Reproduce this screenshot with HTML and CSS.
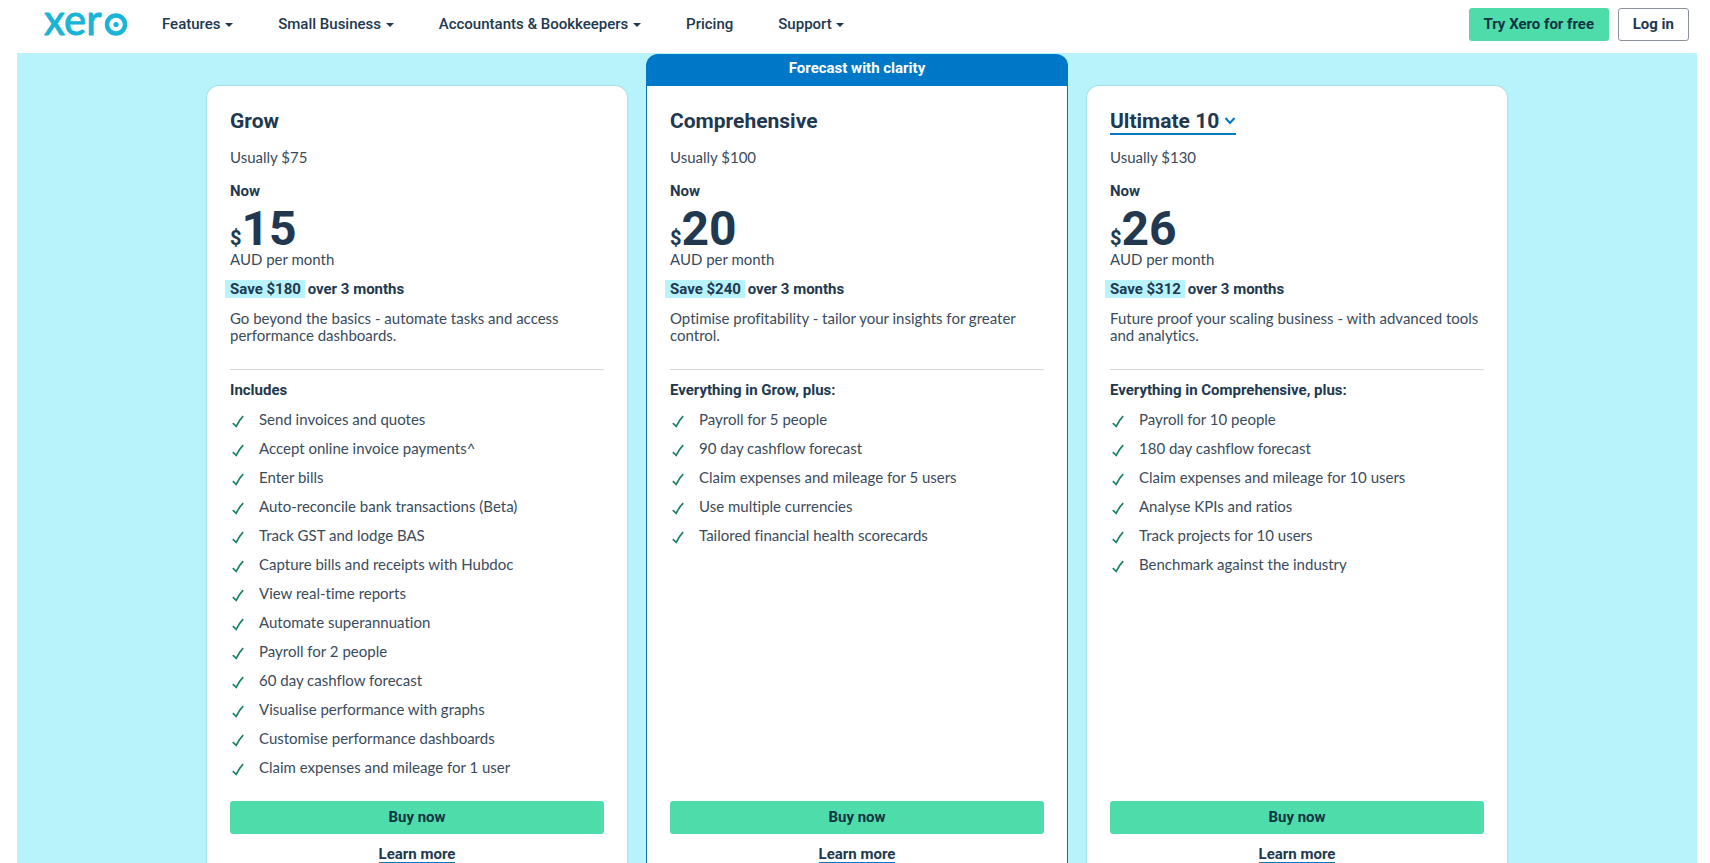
FILE: index.html
```html
<!DOCTYPE html>
<html lang="en">
<head>
    <meta charset="UTF-8">
    <meta name="viewport" content="width=device-width, initial-scale=1.0">
    <title>Pricing Plans | Xero AU</title>
    <link rel="stylesheet" href="styles.css">
</head>
<body>
    <!-- Shared icons -->
    <svg class="sprite" aria-hidden="true">
        <symbol id="check" viewBox="0 0 12 13">
            <path d="M0.8 8.2 L4.2 11.4 C6 7.6 8.2 4.2 11.2 1.2" fill="none" stroke="currentColor" stroke-width="1.7"/>
        </symbol>
        <symbol id="caret" viewBox="0 0 8 4">
            <path d="M0 0h8L4 4z" fill="currentColor"/>
        </symbol>
    </svg>

    <header class="header">
        <a href="#" class="logo" aria-label="Xero">
            <svg width="84" height="32" viewBox="0 0 84 32">
                <text class="logo-text" x="1" y="26">xer</text>
                <circle cx="73" cy="15.5" r="9" fill="none" stroke="#1ab4d7" stroke-width="4.4"/>
                <circle cx="73" cy="15.5" r="2.6" fill="#1ab4d7"/>
            </svg>
        </a>
        <nav class="nav">
            <button type="button">Features <svg class="caret"><use href="#caret"/></svg></button>
            <button type="button">Small Business <svg class="caret"><use href="#caret"/></svg></button>
            <button type="button">Accountants &amp; Bookkeepers <svg class="caret"><use href="#caret"/></svg></button>
            <a href="#">Pricing</a>
            <button type="button">Support <svg class="caret"><use href="#caret"/></svg></button>
        </nav>
        <div class="header-actions">
            <button type="button" class="btn btn-primary btn-try">Try Xero for free</button>
            <button type="button" class="btn btn-outline">Log in</button>
        </div>
    </header>

    <main class="pricing">
        <div class="plans">
            <section class="plan">
                <h2>Grow</h2>
                <p class="usual">Usually $75</p>
                <p class="now">Now</p>
                <p class="price"><span>$</span>15</p>
                <p>AUD per month</p>
                <p class="saving"><mark>Save $180</mark> over 3 months</p>
                <p class="description">Go beyond the basics - automate tasks and access performance dashboards.</p>
                <h3>Includes</h3>
                <ul class="features">
                    <li><svg class="check"><use href="#check"/></svg>Send invoices and quotes</li>
                    <li><svg class="check"><use href="#check"/></svg>Accept online invoice payments^</li>
                    <li><svg class="check"><use href="#check"/></svg>Enter bills</li>
                    <li><svg class="check"><use href="#check"/></svg>Auto-reconcile bank transactions (Beta)</li>
                    <li><svg class="check"><use href="#check"/></svg>Track GST and lodge BAS</li>
                    <li><svg class="check"><use href="#check"/></svg>Capture bills and receipts with Hubdoc</li>
                    <li><svg class="check"><use href="#check"/></svg>View real-time reports</li>
                    <li><svg class="check"><use href="#check"/></svg>Automate superannuation</li>
                    <li><svg class="check"><use href="#check"/></svg>Payroll for 2 people</li>
                    <li><svg class="check"><use href="#check"/></svg>60 day cashflow forecast</li>
                    <li><svg class="check"><use href="#check"/></svg>Visualise performance with graphs</li>
                    <li><svg class="check"><use href="#check"/></svg>Customise performance dashboards</li>
                    <li><svg class="check"><use href="#check"/></svg>Claim expenses and mileage for 1 user</li>
                </ul>
                <button type="button" class="btn btn-primary btn-buy">Buy now</button>
                <a href="#" class="learn-more">Learn more</a>
            </section>

            <section class="plan plan-featured">
                <div class="banner">Forecast with clarity</div>
                <h2>Comprehensive</h2>
                <p class="usual">Usually $100</p>
                <p class="now">Now</p>
                <p class="price"><span>$</span>20</p>
                <p>AUD per month</p>
                <p class="saving"><mark>Save $240</mark> over 3 months</p>
                <p class="description">Optimise profitability - tailor your insights for greater control.</p>
                <h3>Everything in Grow, plus:</h3>
                <ul class="features">
                    <li><svg class="check"><use href="#check"/></svg>Payroll for 5 people</li>
                    <li><svg class="check"><use href="#check"/></svg>90 day cashflow forecast</li>
                    <li><svg class="check"><use href="#check"/></svg>Claim expenses and mileage for 5 users</li>
                    <li><svg class="check"><use href="#check"/></svg>Use multiple currencies</li>
                    <li><svg class="check"><use href="#check"/></svg>Tailored financial health scorecards</li>
                </ul>
                <button type="button" class="btn btn-primary btn-buy">Buy now</button>
                <a href="#" class="learn-more">Learn more</a>
            </section>

            <section class="plan">
                <h2>
                    <label class="plan-picker">
                        <select aria-label="Ultimate plan size">
                            <option>Ultimate 10</option>
                        </select>
                        <svg width="12" height="8" viewBox="0 0 12 8"><path d="M1.5 1l4.5 5 4.5-5" fill="none" stroke="#0078c8" stroke-width="2"/></svg>
                    </label>
                </h2>
                <p class="usual">Usually $130</p>
                <p class="now">Now</p>
                <p class="price"><span>$</span>26</p>
                <p>AUD per month</p>
                <p class="saving"><mark>Save $312</mark> over 3 months</p>
                <p class="description">Future proof your scaling business - with advanced tools and analytics.</p>
                <h3>Everything in Comprehensive, plus:</h3>
                <ul class="features">
                    <li><svg class="check"><use href="#check"/></svg>Payroll for 10 people</li>
                    <li><svg class="check"><use href="#check"/></svg>180 day cashflow forecast</li>
                    <li><svg class="check"><use href="#check"/></svg>Claim expenses and mileage for 10 users</li>
                    <li><svg class="check"><use href="#check"/></svg>Analyse KPIs and ratios</li>
                    <li><svg class="check"><use href="#check"/></svg>Track projects for 10 users</li>
                    <li><svg class="check"><use href="#check"/></svg>Benchmark against the industry</li>
                </ul>
                <button type="button" class="btn btn-primary btn-buy">Buy now</button>
                <a href="#" class="learn-more">Learn more</a>
            </section>
        </div>
    </main>
</body>
</html>
```

FILE: styles.css
```css
:root {
    --ink: #21384f;
    --text: #3a4b5c;
    --blue: #0078c8;
    --sky: #b8f3fc;
    --green: #4edcab;
    --logo: #1ab4d7;
    --heading-font: Roboto, "Liberation Sans", sans-serif;
}

* {
    margin: 0;
    padding: 0;
    box-sizing: border-box;
}

body {
    height: 100vh;
    overflow: hidden;
    background-color: white;
    color: var(--text);
    font-family: Lato, "Liberation Sans", sans-serif;
    font-size: 15px;
    font-variant-ligatures: none;
    line-height: 17px;
}

button,
select {
    font: inherit;
    color: inherit;
    background: none;
    border: none;
    cursor: pointer;
}

.sprite {
    display: none;
}

/* Header */
.header {
    display: flex;
    align-items: center;
    padding: 8px 21px 12px 43px;
    font-family: var(--heading-font);
}

.logo {
    display: flex;
}

.logo svg {
    overflow: visible;
}

.logo-text {
    font-family: Lato, sans-serif;
    font-size: 42px;
    fill: var(--logo);
    stroke: var(--logo);
    stroke-width: 1;
    stroke-linejoin: round;
}

.nav {
    display: flex;
    gap: 45px;
    margin-left: 35px;
    color: var(--ink);
    font-weight: 500;
}

.nav a {
    color: inherit;
    text-decoration: none;
}

.caret {
    width: 8px;
    height: 4px;
    margin-left: 1px;
    vertical-align: middle;
}

.header-actions {
    display: flex;
    gap: 9px;
    margin-left: auto;
}

.btn {
    height: 33px;
    padding: 0 14px;
    border-radius: 3px;
    color: var(--ink);
    font-family: var(--heading-font);
    font-weight: 700;
}

.btn-primary {
    background-color: var(--green);
    color: #123544;
}

.btn-try {
    min-width: 140px;
}

.btn-outline {
    min-width: 70px;
    border: 1px solid #8b929c;
}

/* Plans */
.pricing {
    margin: 0 13px 0 17px;
    padding: 33px 20px 40px;
    background-color: var(--sky);
}

.plans {
    display: grid;
    grid-template-columns: repeat(3, 1fr);
    gap: 20px;
    max-width: 1300px;
    margin: 0 auto;
}

.plan {
    display: flex;
    flex-direction: column;
    padding: 23px 23px 32px;
    background-color: white;
    border-radius: 12px;
    box-shadow: 0 0 1px 1px rgba(0, 10, 30, 0.08);
}

.plan-featured {
    position: relative;
    margin: 0 -1px;
    padding-bottom: 31px;
    border: 1px solid #0f6fae;
    border-top: none;
    border-radius: 0 0 12px 12px;
    box-shadow: none;
}

/* Sits on top of the card */
.banner {
    position: absolute;
    bottom: 100%;
    left: -1px;
    right: -1px;
    height: 32px;
    border-radius: 12px 12px 0 0;
    background-color: var(--blue);
    color: white;
    font-family: var(--heading-font);
    font-weight: 700;
    line-height: 28px;
    text-align: center;
}

.plan h2 {
    margin-bottom: 16px;
    color: var(--ink);
    font-family: var(--heading-font);
    font-size: 21px;
    line-height: 24px;
}

.plan-picker {
    display: inline-flex;
    align-items: center;
    gap: 4px;
    height: 26px;
    margin-bottom: -2px;
    border-bottom: 2px solid var(--blue);
    vertical-align: top;
}

.plan-picker select {
    appearance: none;
    outline: none;
}

.usual {
    margin-bottom: 17px;
}

.now,
.saving,
.plan h3 {
    color: var(--ink);
    font-family: var(--heading-font);
    font-size: 15px;
    font-weight: 700;
    line-height: 17px;
}

.price {
    margin: 7px 0 0;
    color: var(--ink);
    font-family: var(--heading-font);
    font-size: 48px;
    font-weight: 700;
    line-height: 44px;
}

.price span {
    font-size: 20px;
    line-height: 20px;
}

.saving {
    margin: 13px 0 12px;
}

.saving mark {
    margin: 0 -1px 0 -5px;
    padding: 0 4px 0 5px;
    background-color: var(--sky);
    color: inherit;
}

.description {
    padding-bottom: 25px;
    border-bottom: 1px solid #d5d9dd;
}

.plan h3 {
    margin: 12px 0;
}

.features {
    display: flex;
    flex-direction: column;
    gap: 12px;
    margin-bottom: 25px;
    list-style: none;
}

.features li {
    display: flex;
    align-items: center;
    gap: 15px;
}

.check {
    flex-shrink: 0;
    width: 12px;
    height: 13px;
    margin: 4px 0 0 2px;
    color: #1b8261;
}

.btn-buy {
    margin-top: auto;
}

.learn-more {
    align-self: center;
    margin-top: 13px;
    border-bottom: 2px solid var(--blue);
    color: var(--ink);
    font-family: var(--heading-font);
    font-weight: 700;
    line-height: 15px;
    text-decoration: none;
}
```
